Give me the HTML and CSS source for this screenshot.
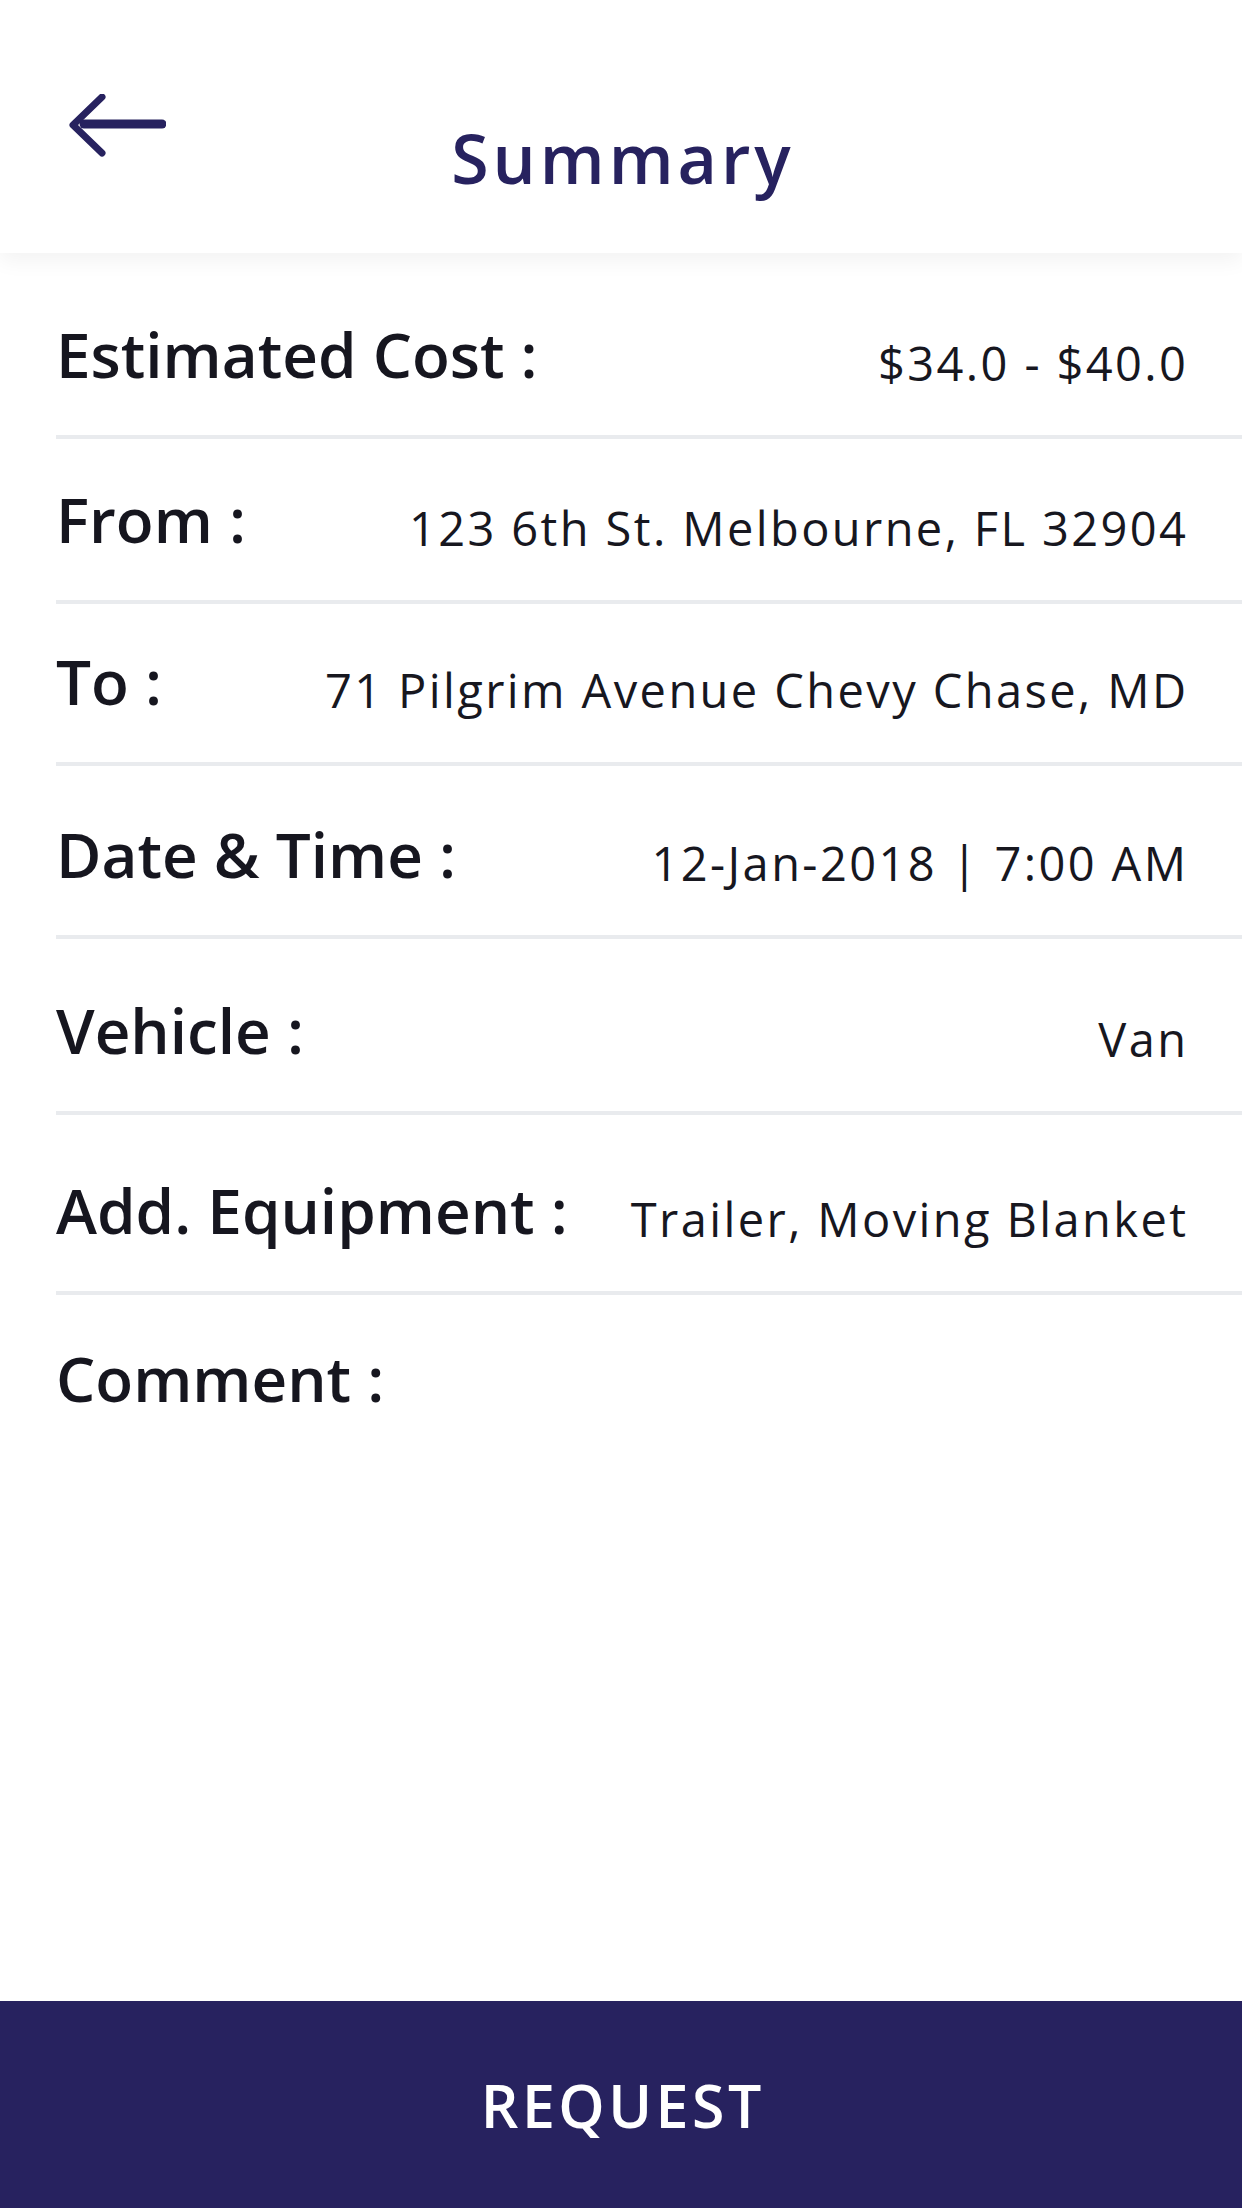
FILE: index.html
```html
<!DOCTYPE html>
<html>
<head>
<meta charset="utf-8">
<link rel="stylesheet" href="styles.css">
</head>
<body>
<div class="screen">
  <header class="header">
    <div class="back">
      <svg class="back-icon" width="100" height="64" viewBox="0 0 100 64">
        <path d="M96 30 H18" stroke="#27225f" stroke-width="9" stroke-linecap="round" fill="none"/>
        <path d="M36 3 L7 31 L36 59" stroke="#27225f" stroke-width="7" stroke-linecap="round" stroke-linejoin="round" fill="none"/>
      </svg>
    </div>
    <h1 class="title">Summary</h1>
    <div></div>
  </header>
  <main class="list">
    <div class="row row-cost">
      <span class="label">Estimated Cost :</span>
      <span class="value">$34.0 - $40.0</span>
    </div>
    <div class="row row-from">
      <span class="label">From :</span>
      <span class="value">123 6th St. Melbourne, FL 32904</span>
    </div>
    <div class="row row-to">
      <span class="label">To :</span>
      <span class="value">71 Pilgrim Avenue Chevy Chase, MD</span>
    </div>
    <div class="row row-date">
      <span class="label">Date &amp; Time :</span>
      <span class="value">12-Jan-2018 | 7:00 AM</span>
    </div>
    <div class="row row-vehicle">
      <span class="label">Vehicle :</span>
      <span class="value">Van</span>
    </div>
    <div class="row row-equip">
      <span class="label">Add. Equipment :</span>
      <span class="value">Trailer, Moving Blanket</span>
    </div>
    <div class="row row-comment">
      <span class="label">Comment :</span>
    </div>
  </main>
  <button class="request">REQUEST</button>
</div>
</body>
</html>
```
FILE: styles.css
```css
html, body {
  margin: 0;
  padding: 0;
  background: #ffffff;
}
.screen {
  width: 1242px;
  height: 2208px;
  display: flex;
  flex-direction: column;
  font-family: "Open Sans", "Liberation Sans", sans-serif;
  color: #16161f;
  overflow: hidden;
}
.header {
  height: 253px;
  flex: none;
  display: grid;
  grid-template-columns: 1fr auto 1fr;
  align-items: start;
  padding: 0 68px;
  box-sizing: border-box;
  background: #fff;
  box-shadow: 0 8px 20px rgba(0,0,0,0.05);
  position: relative;
  z-index: 1;
}
.back-icon {
  display: block;
  margin-top: 94px;
  margin-left: -2px;
}
.title {
  margin: 124px 0 0;
  font-size: 68px;
  line-height: 1;
  font-weight: 600;
  color: #27225f;
  letter-spacing: 4px;
  padding-left: 4px;
}
.list {
  padding: 0 0 0 56px;
  flex: 1;
}
.row {
  padding: 50px 56px 50px 0;
  display: flex;
  justify-content: space-between;
  align-items: flex-end;
  border-bottom: 4px solid #e9ebee;
}
.row-cost { padding-top: 70px; }
.row-from { padding-top: 49px; }
.row-to { padding-top: 46px; }
.row-date { padding-top: 57px; }
.row-vehicle { padding-top: 60px; }
.row-equip { padding-top: 64px; }
.row-comment {
  padding-top: 52px;
  border-bottom: none;
}
.label {
  font-size: 62px;
  line-height: 62px;
  font-weight: 600;
  color: #16161f;
  white-space: nowrap;
}
.value {
  font-size: 47px;
  line-height: 43px;
  font-weight: 400;
  color: #17171f;
  letter-spacing: 2.4px;
  margin-right: -2.4px;
  white-space: nowrap;
}
.request {
  flex: none;
  height: 207px;
  width: 100%;
  border: none;
  margin: 0;
  background: #27225f;
  color: #ffffff;
  font-family: "Open Sans", "Liberation Sans", sans-serif;
  font-size: 59px;
  font-weight: 600;
  letter-spacing: 3.5px;
  padding: 0 0 0 3.5px;
}
```
